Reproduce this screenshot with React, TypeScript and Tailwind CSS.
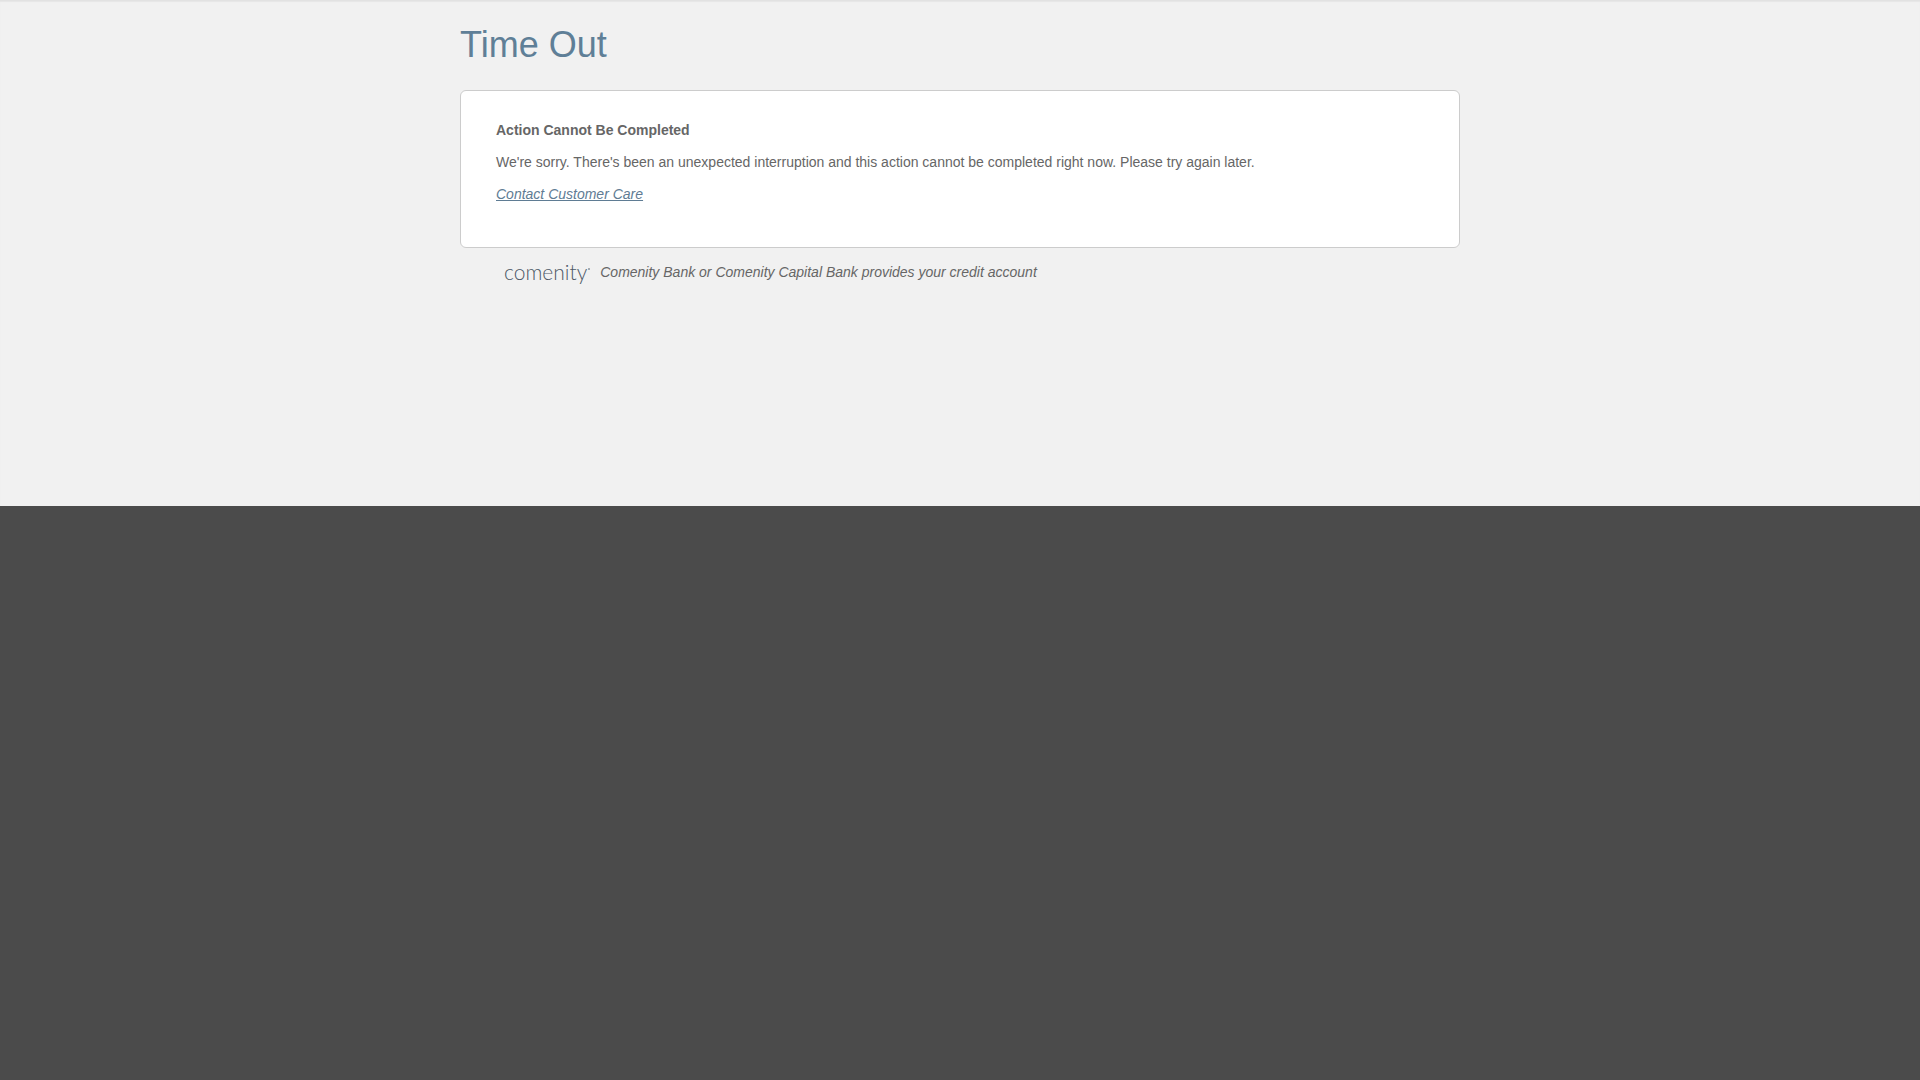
function ComenityLogo() {
    return (
        <span className="flex items-start font-[Lato,sans-serif] font-light text-[#4d5967]">
            <span className="text-[21px] leading-6">comenity</span>
            <span className="mt-2 ml-px size-0.5 rounded-full bg-[#8b949e]" />
        </span>
    );
}

function MessageCard() {
    return (
        <section className="flex flex-col gap-2.5 rounded-md border border-[#cccccc] bg-white px-[35px] pt-7 pb-[42px]">
            <p className="font-bold">Action Cannot Be Completed</p>
            <p>
                We're sorry. There's been an unexpected interruption and this action cannot be completed right now.
                Please try again later.
            </p>
            <p>
                <a href="#contact" className="text-[#5f7c94] italic underline">
                    Contact Customer Care
                </a>
            </p>
        </section>
    );
}

export default function App() {
    return (
        <div className="min-h-screen bg-[#4b4b4b] font-['Liberation_Sans',Arial,sans-serif] text-sm leading-[22px] text-[#666666]">
            <div className="min-h-[506px] border-t border-[#e2e2e2] bg-[#f1f1f1] shadow-[inset_0_1px_1px_#e6e6e6]">
                <div className="mx-auto max-w-[1000px]">
                    <main>
                        <h1 className="pt-6 pb-[25px] text-4xl leading-10 text-[#5f7f97]">Time Out</h1>
                        <MessageCard />
                    </main>
                    <footer className="flex items-center gap-2.5 px-11 pt-3">
                        <ComenityLogo />
                        <p className="italic">Comenity Bank or Comenity Capital Bank provides your credit account</p>
                    </footer>
                </div>
            </div>
        </div>
    );
}
